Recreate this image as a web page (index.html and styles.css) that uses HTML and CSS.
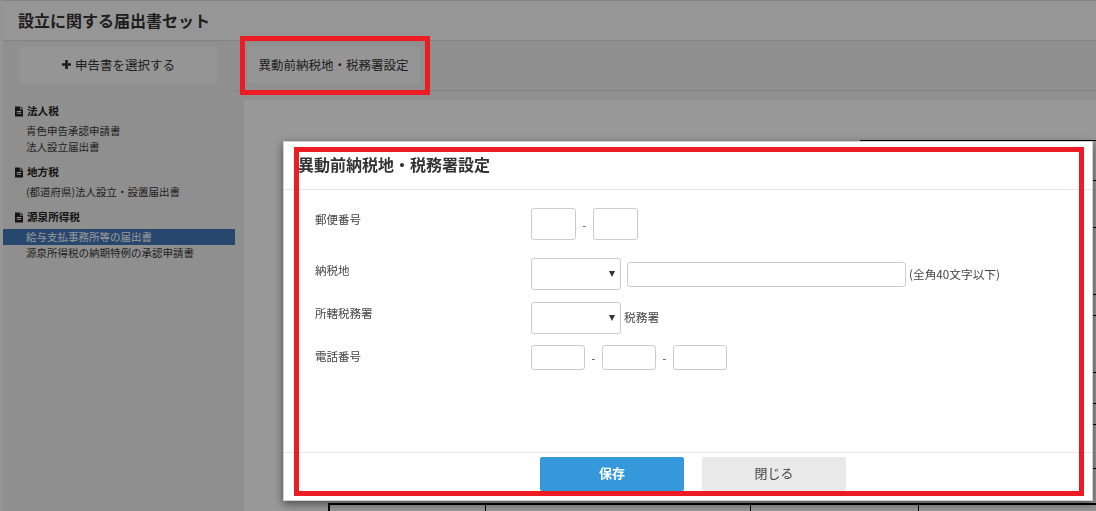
FILE: index.html
```html
<!DOCTYPE html>
<html lang="ja">
<head>
<meta charset="utf-8">
<title>設立に関する届出書セット</title>
<link rel="stylesheet" href="styles.css">
</head>
<body>
<div class="app">
  <header class="app-header"><h1>設立に関する届出書セット</h1></header>
  <div class="app-body">
    <aside class="sidebar">
      <div class="side-top">
        <button class="add-btn"><svg class="plus" viewBox="0 0 10 10"><path d="M3.5 0h3v3.5H10v3H6.5V10h-3V6.5H0v-3h3.5z"/></svg>申告書を選択する</button>
      </div>
      <nav class="nav">
        <h2 class="nav-head"><svg class="doc" viewBox="0 0 9 11"><path d="M0 0h5.5v3.2H9V11H0zM6.3 0 9 2.5H6.3zM2 5v1h5V5zm0 2v1h5V7z" fill-rule="evenodd"/></svg>法人税</h2>
        <ul class="nav-list">
          <li>青色申告承認申請書</li>
          <li>法人設立届出書</li>
        </ul>
        <h2 class="nav-head"><svg class="doc" viewBox="0 0 9 11"><path d="M0 0h5.5v3.2H9V11H0zM6.3 0 9 2.5H6.3zM2 5v1h5V5zm0 2v1h5V7z" fill-rule="evenodd"/></svg>地方税</h2>
        <ul class="nav-list">
          <li>(都道府県)法人設立・設置届出書</li>
        </ul>
        <h2 class="nav-head"><svg class="doc" viewBox="0 0 9 11"><path d="M0 0h5.5v3.2H9V11H0zM6.3 0 9 2.5H6.3zM2 5v1h5V5zm0 2v1h5V7z" fill-rule="evenodd"/></svg>源泉所得税</h2>
        <ul class="nav-list">
          <li class="active">給与支払事務所等の届出書</li>
          <li>源泉所得税の納期特例の承認申請書</li>
        </ul>
      </nav>
    </aside>
    <main class="main">
      <div class="toolbar"><button class="tool-btn">異動前納税地・税務署設定</button></div>
      <div class="sheet-area">
        <div class="sheet-rows">
          <div class="r40"></div><div class="r47"></div><div class="r67"></div><div class="r21"></div><div class="r57"></div><div class="r31"></div><div class="r21"></div><div class="r44"></div><div class="r35"></div>
        </div>
        <div class="sheet-row"><span class="c1"></span><span class="c2"></span><span class="c3"></span><span class="c4"></span></div>
      </div>
    </main>
  </div>
</div>

<div class="backdrop"></div>

<section class="modal">
  <h3 class="modal-title">異動前納税地・税務署設定</h3>
  <form class="modal-body">
    <div class="row row-zip">
      <label class="lbl">郵便番号</label>
      <div class="fields">
        <input class="inp w45 h32" type="text"><span class="dash">-</span><input class="inp w45 h32" type="text">
      </div>
    </div>
    <div class="row row-place">
      <label class="lbl">納税地</label>
      <div class="fields">
        <span class="sel w90 h32"><i class="arrow"></i></span>
        <input class="inp w279 h25 gap6" type="text"><span class="note">(全角40文字以下)</span>
      </div>
    </div>
    <div class="row row-office">
      <label class="lbl">所轄税務署</label>
      <div class="fields">
        <span class="sel w90 h32"><i class="arrow"></i></span><span class="note">税務署</span>
      </div>
    </div>
    <div class="row row-tel">
      <label class="lbl">電話番号</label>
      <div class="fields">
        <input class="inp w54 h25" type="text"><span class="dash">-</span><input class="inp w54 h25" type="text"><span class="dash">-</span><input class="inp w54 h25" type="text">
      </div>
    </div>
  </form>
  <footer class="modal-foot">
    <button class="btn btn-save">保存</button>
    <button class="btn btn-close">閉じる</button>
  </footer>
</section>

<div class="mark mark-tool"></div>
<div class="mark mark-modal"></div>
</body>
</html>
```

FILE: styles.css
```css
* { box-sizing: border-box; }
html, body { margin: 0; height: 100%; overflow: hidden; }
body {
  font-family: "Noto Sans CJK JP", "Noto Sans", sans-serif;
  font-size: 12px;
  color: #333;
  background: #fff;
}
.app { height: 511px; display: flex; flex-direction: column; border-left: 3px solid #f8f8f8; border-top: 1px solid #ddd; background: #eee; }
.app-header {
  height: 40px;
  flex: none;
  background: #fbfbfb;
  border-bottom: 1px solid #dcdcdc;
  padding-left: 15px;
  display: flex;
  align-items: center;
}
.app-header h1 { margin: -2px 0 0; font-size: 16px; font-weight: 700; color: #333; }
.app-body { flex: 1; display: flex; min-height: 0; }
.sidebar { width: 232px; flex: none; }
.side-top { height: 50px; padding: 5px 0 0 16px; }
.add-btn {
  width: 199px; height: 38px;
  border: 1px solid #f4f4f4; border-radius: 2px;
  background: #f8f8f8;
  font: inherit; font-size: 12.5px; color: #333;
  display: flex; align-items: center; justify-content: center;
  padding: 0 0 1px;
}
.plus { width: 9px; height: 9px; fill: #333; margin-right: 4px; }
.nav { padding-top: 8px; }
.nav-head {
  margin: 0; padding-left: 12px;
  font-size: 10.6px; font-weight: 700; line-height: 24px; height: 24px; color: #222;
  display: flex; align-items: center;
}
.doc { width: 8px; height: 11px; fill: #222; margin-right: 4px; flex: none; }
.nav-list { list-style: none; margin: 0 0 5px; padding: 0; }
.nav-list li { height: 16px; line-height: 16px; padding-left: 23px; font-size: 10.5px; white-space: nowrap; color: #3a3a3a; }
.nav-list li.active { background: #4377b9; color: #fff; }
.main { flex: 1; display: flex; flex-direction: column; min-width: 0; }
.toolbar { height: 50px; flex: none; border-bottom: 1px solid #d8d8d8; padding: 5px 0 0 12px; }
.tool-btn {
  width: 173px; height: 38px;
  border: 1px solid #f4f4f4; border-radius: 2px;
  background: #f8f8f8;
  font: inherit; font-size: 12.5px; color: #333; padding: 0 0 1px;
}
.sheet-area { flex: 1; background: #fff; margin: 9px 0 0 9px; overflow: hidden; }
.sheet-rows { margin: 40px 0 0 616px; }
.sheet-rows div { border-top: 1px solid #000; }
.r40 { height: 40px; }
.r47 { height: 47px; }
.r67 { height: 67px; }
.r21 { height: 21px; }
.r57 { height: 57px; }
.r31 { height: 31px; }
.r44 { height: 44px; }
.r35 { height: 35px; }
.sheet-row { margin-left: 84px; height: 12px; border-top: 2px solid #000; display: flex; }
.sheet-row span { display: block; border-left: 1px solid #000; }
.sheet-row .c1 { width: 157px; border-left-width: 2px; }
.sheet-row .c2 { width: 265px; }
.sheet-row .c3 { width: 168px; }
.sheet-row .c4 { flex: 1; }

.backdrop { position: fixed; inset: 0; background: rgba(0,0,0,.4); }

.modal {
  position: absolute; left: 283px; top: 141px; width: 810px; height: 360px;
  background: #fff;
  border: 1px solid #d0d0d0;
  box-shadow: 0 3px 9px rgba(0,0,0,.5);
  display: flex; flex-direction: column;
}
.modal-title {
  margin: 0; height: 48px; flex: none;
  border-bottom: 1px solid #e5e5e5;
  padding-left: 14px;
  font-size: 16px; font-weight: 700; line-height: 45px; color: #333;
}
.modal-body { flex: 1; padding-left: 31px; }
.row { display: flex; }
.lbl { width: 216px; flex: none; font-size: 11.5px; color: #444; line-height: 22px; }
.fields { display: flex; }
.row-zip { padding-top: 18px; height: 68px; }
.row-place { height: 44px; }
.row-place .lbl { line-height: 25px; }
.row-office { height: 43px; }
.inp, .sel { display: block; border: 1px solid #ccc; border-radius: 3px; background: #fff; padding: 0; margin: 0; }
.w45 { width: 45px; }
.w54 { width: 54px; }
.w90 { width: 90px; }
.w279 { width: 279px; }
.h25 { height: 25px; }
.h32 { height: 32px; }
.gap6 { margin: 4px 0 0 6px; }
.dash { width: 17px; text-align: center; font-size: 11px; color: #444; line-height: 34px; }
.row-tel .dash { line-height: 26px; }
.note { font-size: 11.7px; margin: 4px 0 0 3px; line-height: 24px; color: #444; white-space: nowrap; }
.row-office .note { margin: 3px 0 0 3px; }
.sel { position: relative; }
.arrow {
  position: absolute; right: 5px; top: 12px;
  border-top: 6px solid #333; border-left: 3px solid transparent; border-right: 3px solid transparent;
}
.modal-foot {
  height: 48px; flex: none;
  border-top: 1px solid #e8e8e8;
  padding: 4px 0 0 10px;
  display: flex; justify-content: center; gap: 18px;
}
.btn { width: 144px; height: 34px; border: 0; border-radius: 2px; font: inherit; font-size: 13px; padding: 0 0 3px; }
.btn-save { background: #3498db; color: #fff; font-weight: 700; }
.btn-close { background: #e9e9e9; color: #444; }

.mark { position: absolute; border: 5px solid #ed1c24; pointer-events: none; }
.mark-tool { left: 240px; top: 36px; width: 190px; height: 59px; }
.mark-modal { left: 294px; top: 147px; width: 790px; height: 349px; }
```
